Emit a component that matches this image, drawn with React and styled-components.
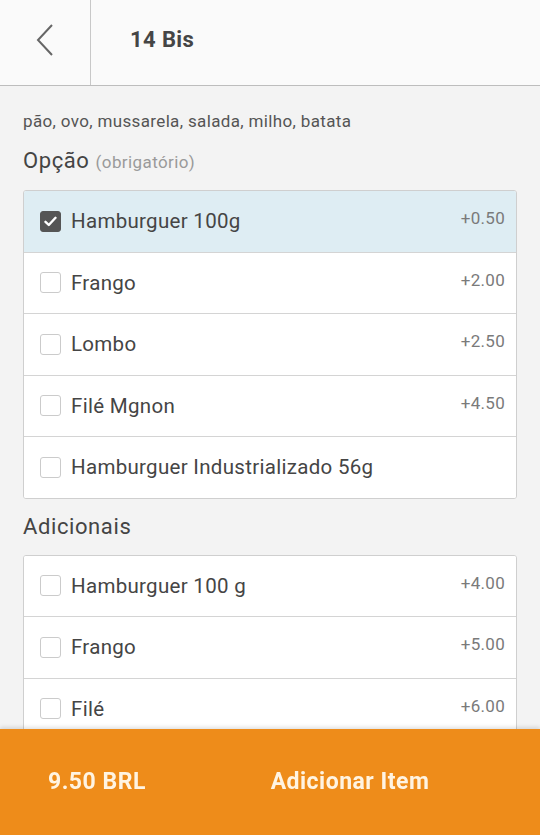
import React, { useState } from "react";
import styled, { createGlobalStyle } from "styled-components";

const GlobalStyle = createGlobalStyle`
  html, body {
    margin: 0;
    padding: 0;
    background: #f3f3f3;
    font-family: Roboto, "Liberation Sans", Arial, sans-serif;
  }
  * { box-sizing: border-box; }
`;

const Page = styled.div`
  min-height: 835px;
  padding-bottom: 120px;
`;

const Header = styled.header`
  display: flex;
  height: 86px;
  background: #fafafa;
  border-bottom: 1px solid #bdbdbd;
`;

const BackButton = styled.button`
  width: 91px;
  height: 100%;
  border: none;
  border-right: 1px solid #c8c8c8;
  background: transparent;
  display: flex;
  align-items: center;
  justify-content: center;
  padding: 0 0 6px 0;
  cursor: pointer;
`;

const Title = styled.h1`
  margin: 0;
  padding: 0 0 7px 39px;
  display: flex;
  align-items: center;
  font-size: 22px;
  font-weight: 700;
  letter-spacing: 0.4px;
  color: #454545;
`;

const Body = styled.main`
  padding: 25px 23px 0;
`;

const Description = styled.p`
  margin: 0;
  font-size: 17px;
  letter-spacing: 0.35px;
  line-height: 20px;
  color: #555;
`;

const SectionTitle = styled.h2`
  margin: ${(p) => (p.$first ? "17px" : "15px")} 0 15px;
  font-size: 22px;
  font-weight: 400;
  letter-spacing: 0.6px;
  line-height: 26px;
  color: #444;
`;

const Hint = styled.span`
  font-size: 17px;
  letter-spacing: 0.4px;
  color: #9a9a9a;
`;

const List = styled.div`
  background: #fff;
  border: 1px solid #cfcfcf;
  border-radius: 3px;
  overflow: hidden;
`;

const Row = styled.label`
  display: flex;
  align-items: center;
  height: ${(p) => (p.$first ? "60.5px" : "61.5px")};
  padding: 0 11px 0 16px;
  background: ${(p) => (p.$checked ? "#deedf3" : "#fff")};
  border-top: ${(p) => (p.$first ? "none" : "1px solid #d4d4d4")};
  cursor: pointer;
`;

const Box = styled.span`
  width: 21px;
  height: 21px;
  flex: none;
  border-radius: 3px;
  border: 1px solid ${(p) => (p.$checked ? "#555" : "#cbcbcb")};
  background: ${(p) => (p.$checked ? "#555" : "#fff")};
  display: flex;
  align-items: center;
  justify-content: center;
`;

const Label = styled.span`
  flex: 1;
  margin-left: 10px;
  font-size: 20.5px;
  letter-spacing: 0.3px;
  color: #454545;
`;

const Price = styled.span`
  align-self: flex-start;
  padding-top: 17px;
  font-size: 17px;
  letter-spacing: 0.3px;
  color: #7a7a7a;
`;

const Footer = styled.footer`
  position: fixed;
  left: 0;
  right: 0;
  bottom: 0;
  height: 106px;
  background: #ee8c1a;
  box-shadow: 0 -2px 4px rgba(0, 0, 0, 0.12);
  display: flex;
  align-items: center;
  color: #fff4e2;
  font-size: 23px;
  font-weight: 700;
  letter-spacing: 0.5px;
`;

const Total = styled.div`
  width: 160px;
  padding-left: 48px;
  padding-bottom: 2px;
  white-space: nowrap;
`;

const AddButton = styled.button`
  flex: 1;
  height: 100%;
  border: none;
  background: transparent;
  color: inherit;
  font: inherit;
  letter-spacing: inherit;
  padding-bottom: 2px;
  cursor: pointer;
`;

const options = [
  { name: "Hamburguer 100g", price: "+0.50" },
  { name: "Frango", price: "+2.00" },
  { name: "Lombo", price: "+2.50" },
  { name: "Filé Mgnon", price: "+4.50" },
  { name: "Hamburguer Industrializado 56g", price: "" },
];

const extras = [
  { name: "Hamburguer 100 g", price: "+4.00" },
  { name: "Frango", price: "+5.00" },
  { name: "Filé", price: "+6.00" },
];

function Check({ checked }) {
  return (
    <Box $checked={checked}>
      {checked && (
        <svg width="13" height="11" viewBox="0 0 13 11">
          <path d="M1.5 5.8 L4.8 9 L11.5 1.8" fill="none" stroke="#fff" strokeWidth="2.4" strokeLinecap="round" strokeLinejoin="round" />
        </svg>
      )}
    </Box>
  );
}

function OptionList({ items, selected, onToggle }) {
  return (
    <List>
      {items.map((it, i) => (
        <Row key={it.name} $first={i === 0} $checked={selected.includes(i)} onClick={() => onToggle(i)}>
          <Check checked={selected.includes(i)} />
          <Label>{it.name}</Label>
          <Price>{it.price}</Price>
        </Row>
      ))}
    </List>
  );
}

export default function App() {
  const [option, setOption] = useState(0);
  const [added, setAdded] = useState([]);

  const toggleExtra = (i) =>
    setAdded((a) => (a.includes(i) ? a.filter((x) => x !== i) : [...a, i]));

  return (
    <Page>
      <GlobalStyle />
      <Header>
        <BackButton aria-label="Voltar">
          <svg width="22" height="34" viewBox="0 0 22 34">
            <path d="M18 2 L4 17 L18 32" fill="none" stroke="#666" strokeWidth="2" />
          </svg>
        </BackButton>
        <Title>14 Bis</Title>
      </Header>
      <Body>
        <Description>pão, ovo, mussarela, salada, milho, batata</Description>
        <SectionTitle $first>
          Opção <Hint>(obrigatório)</Hint>
        </SectionTitle>
        <OptionList items={options} selected={[option]} onToggle={setOption} />
        <SectionTitle>Adicionais</SectionTitle>
        <OptionList items={extras} selected={added} onToggle={toggleExtra} />
      </Body>
      <Footer>
        <Total>9.50 BRL</Total>
        <AddButton>Adicionar Item</AddButton>
      </Footer>
    </Page>
  );
}
